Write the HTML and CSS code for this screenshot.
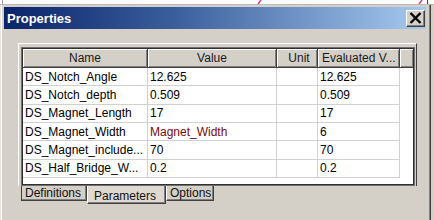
FILE: index.html
```html
<!DOCTYPE html>
<html>
<head>
<meta charset="utf-8">
<title>Properties</title>
<link rel="stylesheet" href="styles.css">
</head>
<body>
<div class="screen">
  <div class="behind">
    <svg width="434" height="5" viewBox="0 0 434 5">
      <rect x="0" y="0" width="434" height="5" fill="#ffffff"/>
      <line x1="2.5" y1="0" x2="2.5" y2="5" stroke="#9a9a9a"/>
      <line x1="427.5" y1="0" x2="427.5" y2="5" stroke="#404040"/>
      <line x1="261" y1="0" x2="258" y2="4" stroke="#d23c9c" stroke-width="1.5"/>
      <line x1="422" y1="0" x2="419" y2="4" stroke="#d23c9c" stroke-width="1.5"/>
      <line x1="0" y1="4.5" x2="434" y2="4.5" stroke="#b8b8b8"/>
    </svg>
  </div>
  <div class="dialog">
    <div class="titlebar">
      <span class="title">Properties</span>
      <span class="close">
        <svg width="13" height="12" viewBox="0 0 13 12">
          <path d="M1.5 1 L11.5 11 M11.5 1 L1.5 11" stroke="#000" stroke-width="2.4" fill="none"/>
        </svg>
      </span>
    </div>
    <div class="client">
      <div class="tabpage">
        <div class="grid">
          <div class="row head">
            <div class="cell c-name center">Name</div>
            <div class="cell c-value center">Value</div>
            <div class="cell c-unit center">Unit</div>
            <div class="cell c-eval">Evaluated V...</div>
            <div class="cell c-fill"></div>
          </div>
          <div class="row">
            <div class="cell c-name">DS_Notch_Angle</div>
            <div class="cell c-value">12.625</div>
            <div class="cell c-unit"></div>
            <div class="cell c-eval">12.625</div>
            <div class="cell c-fill"></div>
          </div>
          <div class="row">
            <div class="cell c-name">DS_Notch_depth</div>
            <div class="cell c-value">0.509</div>
            <div class="cell c-unit"></div>
            <div class="cell c-eval">0.509</div>
            <div class="cell c-fill"></div>
          </div>
          <div class="row">
            <div class="cell c-name">DS_Magnet_Length</div>
            <div class="cell c-value">17</div>
            <div class="cell c-unit"></div>
            <div class="cell c-eval">17</div>
            <div class="cell c-fill"></div>
          </div>
          <div class="row">
            <div class="cell c-name">DS_Magnet_Width</div>
            <div class="cell c-value ref">Magnet_Width</div>
            <div class="cell c-unit"></div>
            <div class="cell c-eval">6</div>
            <div class="cell c-fill"></div>
          </div>
          <div class="row">
            <div class="cell c-name">DS_Magnet_include...</div>
            <div class="cell c-value">70</div>
            <div class="cell c-unit"></div>
            <div class="cell c-eval">70</div>
            <div class="cell c-fill"></div>
          </div>
          <div class="row">
            <div class="cell c-name">DS_Half_Bridge_W...</div>
            <div class="cell c-value">0.2</div>
            <div class="cell c-unit"></div>
            <div class="cell c-eval">0.2</div>
            <div class="cell c-fill"></div>
          </div>
        </div>
      </div>
      <div class="tabs">
        <div class="tab">Definitions</div>
        <div class="tab active">Parameters</div>
        <div class="tab">Options</div>
      </div>
    </div>
  </div>
</div>
</body>
</html>
```

FILE: styles.css
```css
* { box-sizing: border-box; }
html, body { margin: 0; padding: 0; }
body {
  width: 434px;
  height: 220px;
  overflow: hidden;
  background: #d4d0c8;
  font-family: "Liberation Sans", Arial, sans-serif;
  font-size: 12px;
  color: #000;
}
.screen { display: flex; flex-direction: column; height: 220px; }
.behind { height: 5px; flex: none; }
.behind svg { display: block; }

.dialog {
  flex: 1;
  width: 431px;
  background: #d4d0c8;
  border-left: 1px solid #e4e2dc;
  border-right: 1px solid #404040;
  box-shadow: inset 1px 0 #ffffff, inset -1px 0 #808080;
  display: flex;
  flex-direction: column;
}

.titlebar {
  margin: 2px 4px 0 3px;
  height: 22px;
  flex: none;
  background: linear-gradient(to right, #0a246a 0%, #3a5e9c 40%, #a6caf0 100%);
  display: flex;
  align-items: center;
  justify-content: space-between;
  padding: 0 1px 0 3px;
}
.title {
  color: #fff;
  font-weight: bold;
  font-size: 13px;
  letter-spacing: 0;
}
.close {
  width: 19px;
  height: 17px;
  background: #d4d0c8;
  border-top: 1px solid #fff;
  border-left: 1px solid #fff;
  border-right: 1px solid #404040;
  border-bottom: 1px solid #404040;
  box-shadow: inset -1px -1px #808080;
  display: flex;
  align-items: center;
  justify-content: center;
  padding: 0 1px 1px 0;
}
.close svg { display: block; }

.client {
  flex: 1;
  padding: 14px 0 0 17px;
}
.tabpage {
  width: 399px;
  border-top: 1px solid #fff;
  border-left: 1px solid #fff;
  border-right: 1px solid #404040;
  padding: 3px 1px 0 2px;
}
.grid {
  height: 139px;
  background: #fff;
  border: 1px solid #707070;
  box-shadow: inset 1px 1px #303030, inset -1px -1px #303030;
  padding: 1px;
  display: flex;
  flex-direction: column;
}
.row { display: flex; height: 18.34px; flex: none; }
.row.head { height: 19px; }
.cell {
  height: 100%;
  padding-left: 2px;
  white-space: nowrap;
  overflow: hidden;
  display: flex;
  align-items: center;
  border-right: 1px solid #d0d0d0;
  border-bottom: 1px solid #d0d0d0;
}
.c-name { width: 125px; }
.c-value { width: 129px; }
.c-unit { width: 41px; }
.c-eval { width: 82px; }
.c-fill { flex: 1; border: none; }
.center { justify-content: center; padding-left: 0; }
.ref { color: #7a0a0a; }

.head .cell {
  background: #d4d0c8;
  color: #1a1a1a;
  border-right: 1px solid #404040;
  border-bottom: 1px solid #404040;
  box-shadow: inset 1px 1px #fff, inset -1px -1px #808080;
}
.head .c-eval { padding-left: 4px; }
.head .c-unit { padding-left: 4px; }
.head .c-fill { border-right: none; }

.tabs {
  display: flex;
  align-items: flex-start;
  padding-left: 3px;
  width: 399px;
}
.tab {
  height: 15px;
  padding: 0 4px 0 3px;
  display: flex;
  align-items: center;
  background: #d4d0c8;
  border-left: 1px solid #fff;
  border-right: 1px solid #404040;
  border-bottom: 1px solid #404040;
  box-shadow: inset -1px -1px #808080;
  color: #111;
}
.tab:first-child { border-left: 1px solid #404040; width: 66px; }
.tab.active {
  height: 18px;
  width: 79px;
  padding: 2px 0 0 6px;
  background: #dedad2;
}
.tab:last-child { width: 48px; }
```
